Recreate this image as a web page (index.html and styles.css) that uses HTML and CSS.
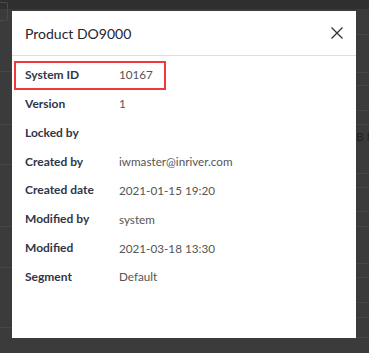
FILE: index.html
```html
<!DOCTYPE html>
<html>
<head>
<meta charset="utf-8">
<link rel="stylesheet" href="styles.css">
</head>
<body>
<div class="backdrop">
  <div class="topstrip"></div>
  <div class="bgcols">
    <div class="bgcol left">
      <div class="bgrow" style="height:63px"><div class="bgbox"></div></div>
      <div class="bgrow" style="height:53px"></div>
      <div class="bgrow" style="height:40px"></div>
      <div class="bgrow" style="height:62px"></div>
      <div class="bgrow" style="height:41px"></div>
      <div class="bgrow" style="height:60px"></div>
    </div>
    <div class="bgcol right">
      <div class="bgrow" style="height:26px"></div>
      <div class="bgrow" style="height:38px"></div>
      <div class="bgrow" style="height:13px"></div>
      <div class="bgrow" style="height:25px"></div>
      <div class="bgrow" style="height:14px"></div>
      <div class="bgrow bgtext" style="height:49px">B M</div>
      <div class="bgrow" style="height:14px"></div>
      <div class="bgrow" style="height:24px"></div>
      <div class="bgrow" style="height:15px"></div>
      <div class="bgrow" style="height:37px"></div>
      <div class="bgrow" style="height:14px"></div>
      <div class="bgrow" style="height:25px"></div>
      <div class="bgrow" style="height:15px"></div>
      <div class="bgrow" style="height:20px"></div>
    </div>
  </div>
</div>

<div class="dialog">
  <div class="dialog-header">
    <h1 class="dialog-title">Product DO9000</h1>
    <button class="close" aria-label="Close">
      <svg width="12" height="12" viewBox="0 0 12 12"><path d="M0.5 0.5 L11.5 11.5 M11.5 0.5 L0.5 11.5" stroke="#333" stroke-width="1.3" fill="none"/></svg>
    </button>
  </div>
  <div class="dialog-body">
    <div class="row"><span class="label">System ID</span><span class="value">10167</span></div>
    <div class="row"><span class="label">Version</span><span class="value">1</span></div>
    <div class="row"><span class="label">Locked by</span><span class="value"></span></div>
    <div class="row"><span class="label">Created by</span><span class="value">iwmaster@inriver.com</span></div>
    <div class="row"><span class="label">Created date</span><span class="value">2021-01-15 19:20</span></div>
    <div class="row"><span class="label">Modified by</span><span class="value">system</span></div>
    <div class="row"><span class="label">Modified</span><span class="value">2021-03-18 13:30</span></div>
    <div class="row"><span class="label">Segment</span><span class="value">Default</span></div>
  </div>
  <div class="highlight"></div>
</div>
</body>
</html>
```

FILE: styles.css
```css
html, body {
  margin: 0;
  padding: 0;
}
body {
  width: 369px;
  height: 353px;
  overflow: hidden;
  position: relative;
  background: #3b3b3b;
  font-family: Lato, "Noto Sans", sans-serif;
}
.backdrop {
  display: flex;
  flex-direction: column;
  height: 353px;
}
.topstrip {
  height: 9px;
  background: #2f2f2f;
  flex: none;
}
.bgcols {
  display: flex;
  justify-content: space-between;
  flex: 1;
}
.bgcol {
  display: flex;
  flex-direction: column;
}
.bgcol.left { width: 12px; }
.bgcol.right { width: 13px; }
.bgrow {
  border-bottom: 1px solid #464646;
  box-sizing: border-box;
  flex: none;
}
.bgbox {
  width: 7px;
  height: 17px;
  margin-top: -7px;
  border: 1px solid #4a4a4a;
  border-left: none;
  border-radius: 0 2px 2px 0;
}
.bgtext {
  color: #222;
  font-size: 12px;
  padding-top: 4px;
  white-space: nowrap;
  overflow: hidden;
}
.dialog {
  position: absolute;
  left: 12px;
  top: 11px;
  width: 344px;
  height: 327px;
  background: #fff;
}
.dialog-header {
  height: 45px;
  box-sizing: border-box;
  border-bottom: 1px solid #dedede;
  display: flex;
  align-items: center;
  justify-content: space-between;
  padding: 0 13px 0 13px;
}
.dialog-title {
  margin: 0;
  font-size: 14px;
  font-weight: 400;
  color: #1f2433;
}
.close {
  border: none;
  background: none;
  padding: 0;
  width: 12px;
  height: 12px;
  display: flex;
}
.dialog-body {
  padding: 4px 13px 0 13px;
}
.row {
  height: 28.86px;
  display: flex;
  align-items: center;
  font-size: 12px;
}
.label {
  width: 94px;
  flex: none;
  color: #2f3648;
  font-weight: 700;
}
.value {
  color: #555;
  font-size: 11.7px;
}
.highlight {
  position: absolute;
  left: 2px;
  top: 50px;
  width: 152px;
  height: 29px;
  box-sizing: border-box;
  border: 2px solid #f0393b;
}
```
